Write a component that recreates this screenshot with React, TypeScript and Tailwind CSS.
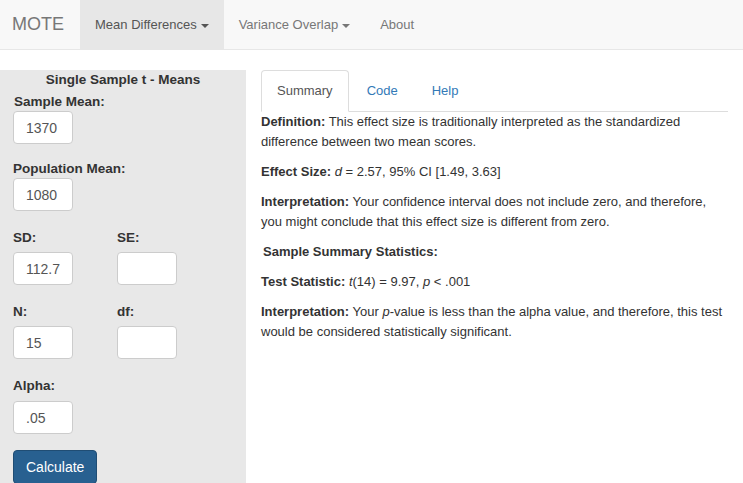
import { useState } from 'react'

function Caret() {
  return (
    <span className="inline-block w-0 h-0 ml-[4px] align-middle border-t-[4px] border-t-current border-x-[4px] border-x-transparent" />
  )
}

function Field({ label, className = '' }: { label: string; className?: string }) {
  return <div className={`font-bold text-[13.5px] leading-[18px] text-[#333] ${className}`}>{label}</div>
}

function Box({ value, className = '' }: { value: string; className?: string }) {
  return (
    <input
      defaultValue={value}
      className={`block w-[60px] h-[33px] px-[12px] bg-white border border-[#cccccc] rounded-[4px] text-[14px] text-[#555] outline-none ${className}`}
    />
  )
}

export default function App() {
  const [tab, setTab] = useState('Summary')
  const tabs = ['Summary', 'Code', 'Help']

  return (
    <div className="min-h-[483px] bg-white text-[13px] text-[#333] font-['Liberation_Sans',Arial,sans-serif]">
      <nav className="h-[50px] bg-[#f8f8f8] border-b border-[#e7e7e7] flex">
        <div className="pl-[12px] w-[80px] text-[18px] leading-[49px] text-[#777]">MOTE</div>
        <div className="flex text-[13px]">
          <div className="px-[15px] h-[49px] leading-[49px] bg-[#e7e7e7] text-[#555]">
            Mean Differences<Caret />
          </div>
          <div className="px-[15px] h-[49px] leading-[49px] text-[#777]">
            Variance Overlap<Caret />
          </div>
          <div className="px-[15px] h-[49px] leading-[49px] text-[#777]">About</div>
        </div>
      </nav>

      <div className="mt-[20px] flex items-start">
        <aside className="w-[246px] min-h-[413px] bg-[#e8e8e8] pt-[1px] pl-[13px]">
          <div className="text-center font-bold text-[13.5px] leading-[18px] pr-[13px]">Single Sample t - Means</div>

          <Field label="Sample Mean:" className="mt-[4px] pl-[1px]" />
          <Box value="1370" />

          <Field label="Population Mean:" className="mt-[16px]" />
          <Box value="1080" />

          <div className="mt-[18px] grid grid-cols-[104px_104px]">
            <div>
              <Field label="SD:" />
              <Box value="112.7" className="mt-[5px]" />
            </div>
            <div>
              <Field label="SE:" />
              <Box value="" className="mt-[5px]" />
            </div>
          </div>

          <div className="mt-[18px] grid grid-cols-[104px_104px]">
            <div>
              <Field label="N:" />
              <Box value="15" className="mt-[5px]" />
            </div>
            <div>
              <Field label="df:" />
              <Box value="" className="mt-[5px]" />
            </div>
          </div>

          <Field label="Alpha:" className="mt-[18px]" />
          <Box value=".05" className="mt-[6px]" />

          <button className="mt-[16px] px-[12px] h-[34px] rounded-[4px] bg-[#286090] border border-[#204d74] text-white text-[14px]">
            Calculate
          </button>
        </aside>

        <main className="ml-[15px] w-[467px]">
          <ul className="flex border-b border-[#dddddd]">
            {tabs.map(t => (
              <li key={t} className="mr-[2px] -mb-px">
                <button
                  onClick={() => setTab(t)}
                  className={
                    t === tab
                      ? 'block px-[15px] py-[10px] leading-[20px] text-[13px] border border-[#dddddd] border-b-white rounded-t-[4px] bg-white text-[#555]'
                      : 'block px-[15px] py-[10px] leading-[20px] text-[13px] border border-transparent text-[#337ab7]'
                  }
                >
                  {t}
                </button>
              </li>
            ))}
          </ul>

          <div className="leading-[20px]">
            <p className="mb-[10px]">
              <b>Definition:</b> This effect size is traditionally interpreted as the standardized difference between two mean scores.
            </p>
            <p className="mb-[10px]">
              <b>Effect Size:</b> <i>d</i> = 2.57, 95% CI [1.49, 3.63]
            </p>
            <p className="mb-[10px]">
              <b>Interpretation:</b> Your confidence interval does not include zero, and therefore, you might conclude that this effect size is different from zero.
            </p>
            <p className="mb-[10px] pl-[2px] font-bold">Sample Summary Statistics:</p>
            <p className="mb-[10px]">
              <b>Test Statistic:</b> <i>t</i>(14) = 9.97, <i>p</i> &lt; .001
            </p>
            <p className="mb-[10px]">
              <b>Interpretation:</b> Your <i>p</i>-value is less than the alpha value, and therefore, this test would be considered statistically significant.
            </p>
          </div>
        </main>
      </div>
    </div>
  )
}
